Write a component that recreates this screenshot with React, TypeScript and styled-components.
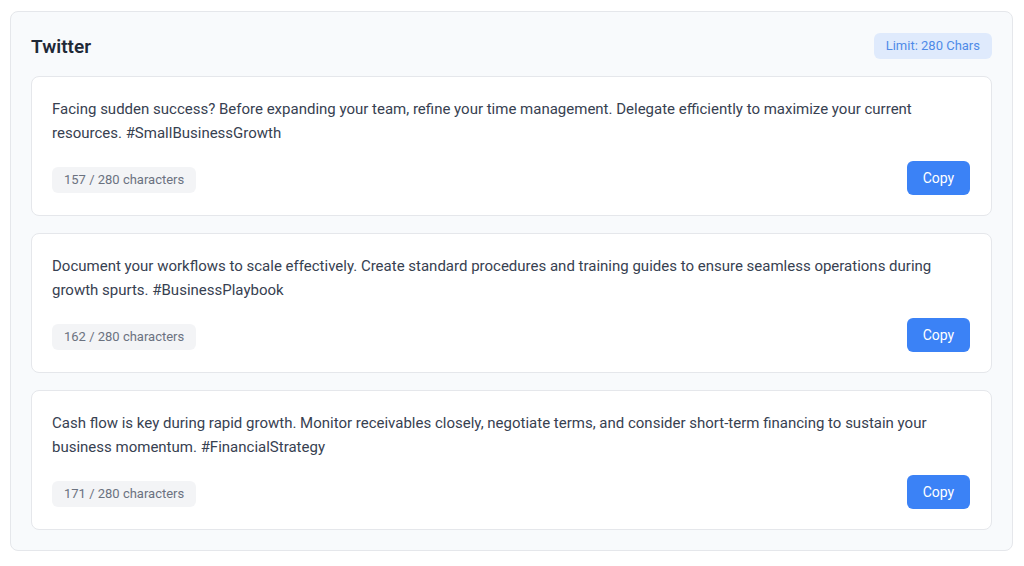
import React from 'react';
import styled, { createGlobalStyle } from 'styled-components';

const GlobalStyle = createGlobalStyle`
    body {
        margin: 0;
        background: #ffffff;
        font-family: Roboto, "Noto Sans", sans-serif;
    }
`;

const Page = styled.div`
    padding: 11px 11px 10px 10px;
`;

const Panel = styled.section`
    background: #f8fafc;
    border: 1px solid #e5e7eb;
    border-radius: 8px;
    padding: 20px;
    display: flex;
    flex-direction: column;
    gap: 16px;
`;

const Header = styled.div`
    display: flex;
    align-items: center;
    justify-content: space-between;
    height: 28px;
`;

const Title = styled.h2`
    margin: 0;
    font-size: 19px;
    font-weight: 600;
    color: #1f2937;
`;

const LimitBadge = styled.span`
    background: #dfeafc;
    color: #4f8ae8;
    font-size: 13px;
    padding: 0 12px;
    height: 26px;
    line-height: 26px;
    border-radius: 6px;
`;

const List = styled.div`
    display: flex;
    flex-direction: column;
    gap: 17px;
`;

const Card = styled.div`
    background: #ffffff;
    border: 1px solid #e5e7eb;
    border-radius: 8px;
    padding: 20px 21px 20px 20px;
`;

const PostText = styled.p`
    margin: 0 0 16px 0;
    font-size: 15px;
    line-height: 24px;
    color: #374151;
`;

const Footer = styled.div`
    display: flex;
    align-items: flex-end;
    justify-content: space-between;
`;

const Counter = styled.span`
    background: #f3f4f6;
    color: #6b7280;
    font-size: 13px;
    height: 26px;
    line-height: 26px;
    padding: 0 12px;
    margin-bottom: 2px;
    border-radius: 6px;
`;

const CopyButton = styled.button`
    background: #3b82f6;
    color: #ffffff;
    border: none;
    border-radius: 6px;
    font-family: inherit;
    font-size: 14px;
    font-weight: 400;
    width: 63px;
    height: 34px;
    cursor: pointer;
    &:hover {
        background: #2563eb;
    }
`;

const posts = [
    'Facing sudden success? Before expanding your team, refine your time management. Delegate efficiently to maximize your current resources. #SmallBusinessGrowth',
    'Document your workflows to scale effectively. Create standard procedures and training guides to ensure seamless operations during growth spurts. #BusinessPlaybook',
    'Cash flow is key during rapid growth. Monitor receivables closely, negotiate terms, and consider short-term financing to sustain your business momentum. #FinancialStrategy',
];

const App: React.FC = () => {
    return (
        <>
            <GlobalStyle />
            <Page>
                <Panel>
                    <Header>
                        <Title>Twitter</Title>
                        <LimitBadge>Limit: 280 Chars</LimitBadge>
                    </Header>
                    <List>
                        {posts.map((post) => (
                            <Card key={post}>
                                <PostText>{post}</PostText>
                                <Footer>
                                    <Counter>{post.length} / 280 characters</Counter>
                                    <CopyButton onClick={() => navigator.clipboard?.writeText(post)}>
                                        Copy
                                    </CopyButton>
                                </Footer>
                            </Card>
                        ))}
                    </List>
                </Panel>
            </Page>
        </>
    );
};

export default App;
